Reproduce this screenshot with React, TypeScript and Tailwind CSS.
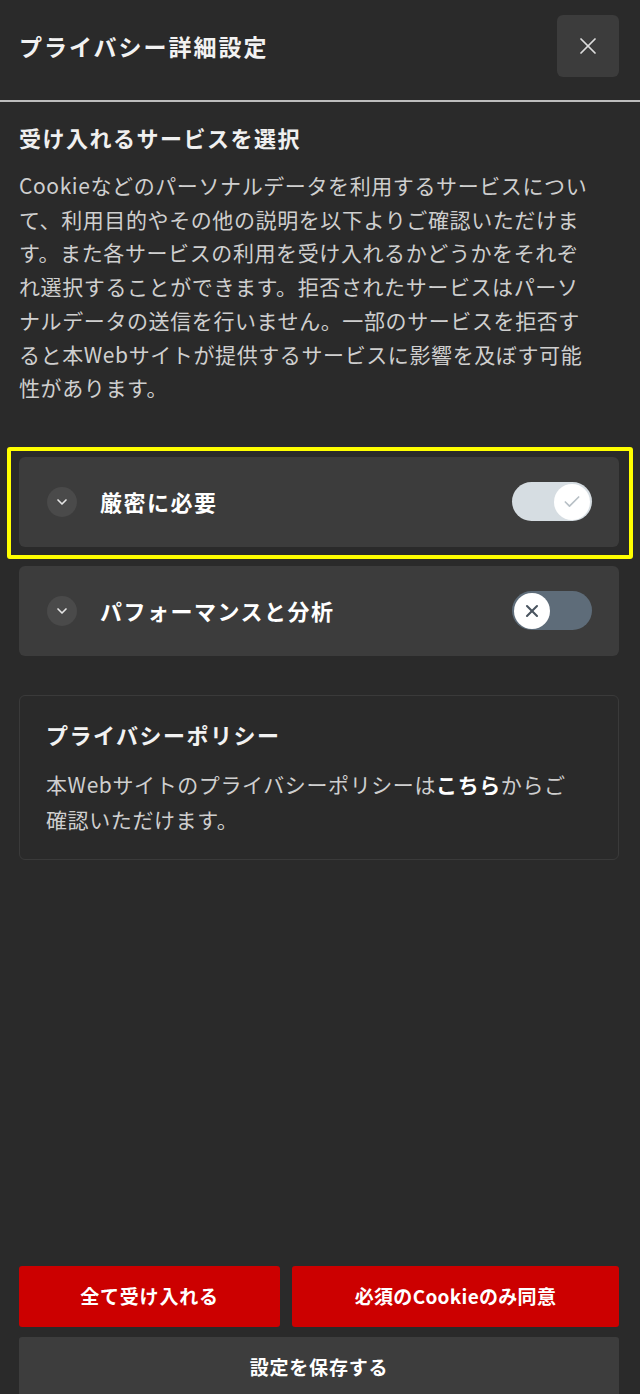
import { ChevronDown, X, Check } from 'lucide-react'

const font = { fontFamily: '"Noto Sans CJK JP", "Noto Sans", sans-serif' }

function Toggle({ on }: { on: boolean }) {
  return (
    <div
      className={`w-[80px] h-[39px] rounded-full flex items-center px-[2px] ${
        on ? 'bg-[#d6dde2] justify-end' : 'bg-[#5e6c79] justify-start'
      }`}
    >
      <div className="w-[36px] h-[36px] rounded-full bg-white flex items-center justify-center">
        {on ? (
          <Check className="h-5 w-5 text-[#b8c0c6]" strokeWidth={2} />
        ) : (
          <X className="h-5 w-5 text-[#4a5560]" strokeWidth={2.5} />
        )}
      </div>
    </div>
  )
}

function Category({ label, on }: { label: string; on: boolean }) {
  return (
    <div className="bg-[#3c3c3c] rounded-md h-[90px] flex items-center justify-between pl-[28px] pr-[27px]">
      <div className="flex items-center gap-[23px]">
        <div className="w-[30px] h-[30px] rounded-full bg-[#4a4a4a] flex items-center justify-center">
          <ChevronDown className="h-4 w-4 text-[#e5e5e5]" strokeWidth={2.5} />
        </div>
        <span className="text-[22px] tracking-[1.5px] font-bold text-white">{label}</span>
      </div>
      <Toggle on={on} />
    </div>
  )
}

export default function App() {
  return (
    <div className="h-[1394px] overflow-hidden bg-[#2a2a2a] flex flex-col text-white" style={font}>
      <div className="h-[100px] flex items-center justify-between pl-[19px] pr-[21px] pb-[8px]">
        <h1 className="text-[23px] tracking-[2px] font-bold text-[#f2f2f2]">プライバシー詳細設定</h1>
        <button className="w-[62px] h-[62px] rounded-md bg-[#3c3c3c] flex items-center justify-center">
          <X className="h-7 w-7 text-[#dcdcdc]" strokeWidth={1.5} />
        </button>
      </div>
      <div className="h-[2px] bg-[#bdbdbd]" />

      <div className="pl-[19px] pr-[21px] pt-[19px]">
        <h2 className="text-[22px] tracking-[1.5px] font-bold text-[#f0f0f0] leading-[32px]">受け入れるサービスを選択</h2>
        <p className="mt-[16px] text-[21px] tracking-[0.6px] leading-[33.7px] text-[#cfcfcf]">
          Cookieなどのパーソナルデータを利用するサービスについ
          <br />
          て、利用目的やその他の説明を以下よりご確認いただけま
          <br />
          す。また各サービスの利用を受け入れるかどうかをそれぞ
          <br />
          れ選択することができます。拒否されたサービスはパーソ
          <br />
          ナルデータの送信を行いません。一部のサービスを拒否す
          <br />
          ると本Webサイトが提供するサービスに影響を及ぼす可能
          <br />
          性があります。
        </p>

        <div className="mt-[52px] relative">
          <Category label="厳密に必要" on />
          <div className="absolute -top-[10px] -bottom-[12px] -left-[12px] -right-[14px] border-[4px] border-[#ffff00] rounded-[3px] pointer-events-none" />
        </div>
        <div className="mt-[19px]">
          <Category label="パフォーマンスと分析" on={false} />
        </div>

        <div className="mt-[39px] border border-[#3a3a3a] rounded-md px-[26px] pt-[22px] pb-[22px]">
          <h3 className="text-[22px] tracking-[1.5px] font-bold text-[#f2f2f2] leading-[32px]">プライバシーポリシー</h3>
          <p className="mt-[17px] text-[21px] tracking-[0.6px] leading-[35px] text-[#cfcfcf]">
            本Webサイトのプライバシーポリシーは<a className="font-bold text-white">こちら</a>からご
            <br />
            確認いただけます。
          </p>
        </div>
      </div>

      <div className="flex-1" />

      <div className="pl-[19px] pr-[21px] flex flex-col gap-[10px] -mb-[20px]">
        <div className="flex gap-[12px]">
          <button className="w-[261px] h-[61px] rounded-[3px] bg-[#cc0000] text-[19px] tracking-[0.8px] font-bold text-white">
            全て受け入れる
          </button>
          <button className="flex-1 h-[61px] rounded-[3px] bg-[#cc0000] text-[19px] tracking-[0.3px] font-bold text-white">
            必須のCookieのみ同意
          </button>
        </div>
        <button className="h-[77px] rounded-[3px] bg-[#3d3d3d] text-[19px] tracking-[0.8px] font-bold text-white pb-[16px]">
          設定を保存する
        </button>
      </div>
    </div>
  )
}
